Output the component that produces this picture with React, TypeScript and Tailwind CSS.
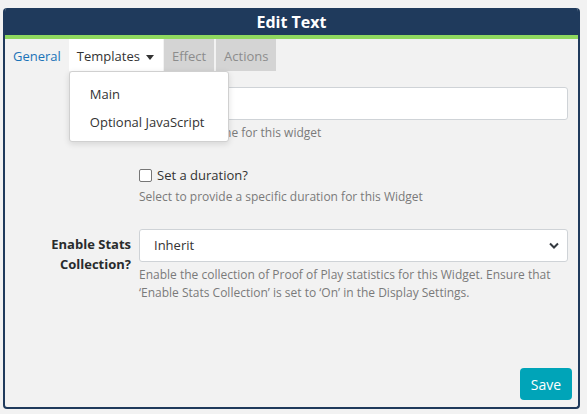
import React from "react";

const font = { fontFamily: '"Open Sans", "Noto Sans", sans-serif' };

function FormRow({
  label,
  help,
  helpGap = "mt-[4px]",
  children,
}: {
  label?: React.ReactNode;
  help?: React.ReactNode;
  helpGap?: string;
  children: React.ReactNode;
}) {
  return (
    <div className="flex">
      <div className="w-[134px] shrink-0 pr-[8px] pt-[5px] text-right text-[13px] font-bold leading-[20px] text-[#292b2c]">
        {label}
      </div>
      <div className="flex-1 pr-[10px]">
        {children}
        {help && (
          <p className={`${helpGap} text-[12px] leading-[18px] text-[#7a7a7a]`}>{help}</p>
        )}
      </div>
    </div>
  );
}

export default function App() {
  return (
    <div className="h-[414px] w-[587px] bg-[#f2f2f2] pl-[3px] pt-[8px]" style={font}>
      <div className="flex h-[401px] w-[577px] flex-col overflow-hidden rounded-[4px] border-2 border-t-0 border-[#1f3a5c] bg-[#f2f2f2]">
        {/* header */}
        <div className="flex h-[27px] items-center justify-center bg-[#1f3a5c] text-[16px] font-bold text-white">
          Edit Text
        </div>
        <div className="h-[4px] bg-[#8fd85f]" />

        {/* tabs */}
        <div className="relative flex h-[32px] text-[13px]">
          <div className="flex items-center pl-[8px] pr-[8px] pt-[3px] text-[#1a73b8]">General</div>
          <div className="relative flex items-center gap-[6px] bg-white pl-[8px] pr-[9px] pt-[3px] text-[#333]">
            Templates
            <span className="mt-[1px] inline-block h-0 w-0 border-x-[4px] border-t-[5px] border-x-transparent border-t-[#333]" />
            <div className="absolute left-0 top-[32px] z-10 w-[160px] whitespace-nowrap rounded-[3px] border border-[#d0d0d0] bg-white pb-[4px] pt-[9px] shadow-[0_2px_6px_rgba(0,0,0,0.12)]">
              <div className="flex h-[28px] items-center px-[20px] text-[#333]">Main</div>
              <div className="flex h-[28px] items-center px-[20px] text-[#333]">Optional JavaScript</div>
            </div>
          </div>
          <div className="ml-[1px] flex items-center bg-[#d4d4d4] px-[8px] pt-[3px] text-[#8c8c8c]">Effect</div>
          <div className="ml-[2px] flex items-center bg-[#d4d4d4] px-[8px] pt-[3px] text-[#8c8c8c]">Actions</div>
        </div>

        {/* form */}
        <div className="flex flex-1 flex-col pt-[16px]">
          <FormRow label="Name" help="An optional name for this widget">
            <div className="h-[33px] rounded-[3px] border border-[#cfd3d7] bg-white" />
          </FormRow>

          <div className="mt-[23px]">
            <FormRow helpGap="mt-[2px]" help="Select to provide a specific duration for this Widget">
              <label className="flex h-[21px] items-center gap-[5px] text-[13px] text-[#333]">
                <span className="inline-block h-[13px] w-[13px] rounded-[2px] border border-[#767676] bg-white" />
                Set a duration?
              </label>
            </FormRow>
          </div>

          <div className="mt-[23px]">
            <FormRow
              label="Enable Stats Collection?"
              help={
                <>
                  Enable the collection of Proof of Play statistics for this Widget. Ensure that
                  ‘Enable Stats Collection’ is set to ‘On’ in the Display Settings.
                </>
              }
            >
              <div className="flex h-[33px] items-center justify-between rounded-[3px] border border-[#cfd3d7] bg-white pl-[14px] pr-[8px] text-[13px] text-[#333]">
                <span>Inherit</span>
                <svg width="10" height="7" viewBox="0 0 10 7" fill="none">
                  <path d="M1 1.5l4 4 4-4" stroke="#343a40" strokeWidth="2" />
                </svg>
              </div>
            </FormRow>
          </div>

          <div className="mt-auto flex justify-end pb-[7px] pr-[6px]">
            <button className="h-[32px] w-[52px] rounded-[4px] bg-[#00a4b8] text-[14px] text-white">
              Save
            </button>
          </div>
        </div>
      </div>
    </div>
  );
}
